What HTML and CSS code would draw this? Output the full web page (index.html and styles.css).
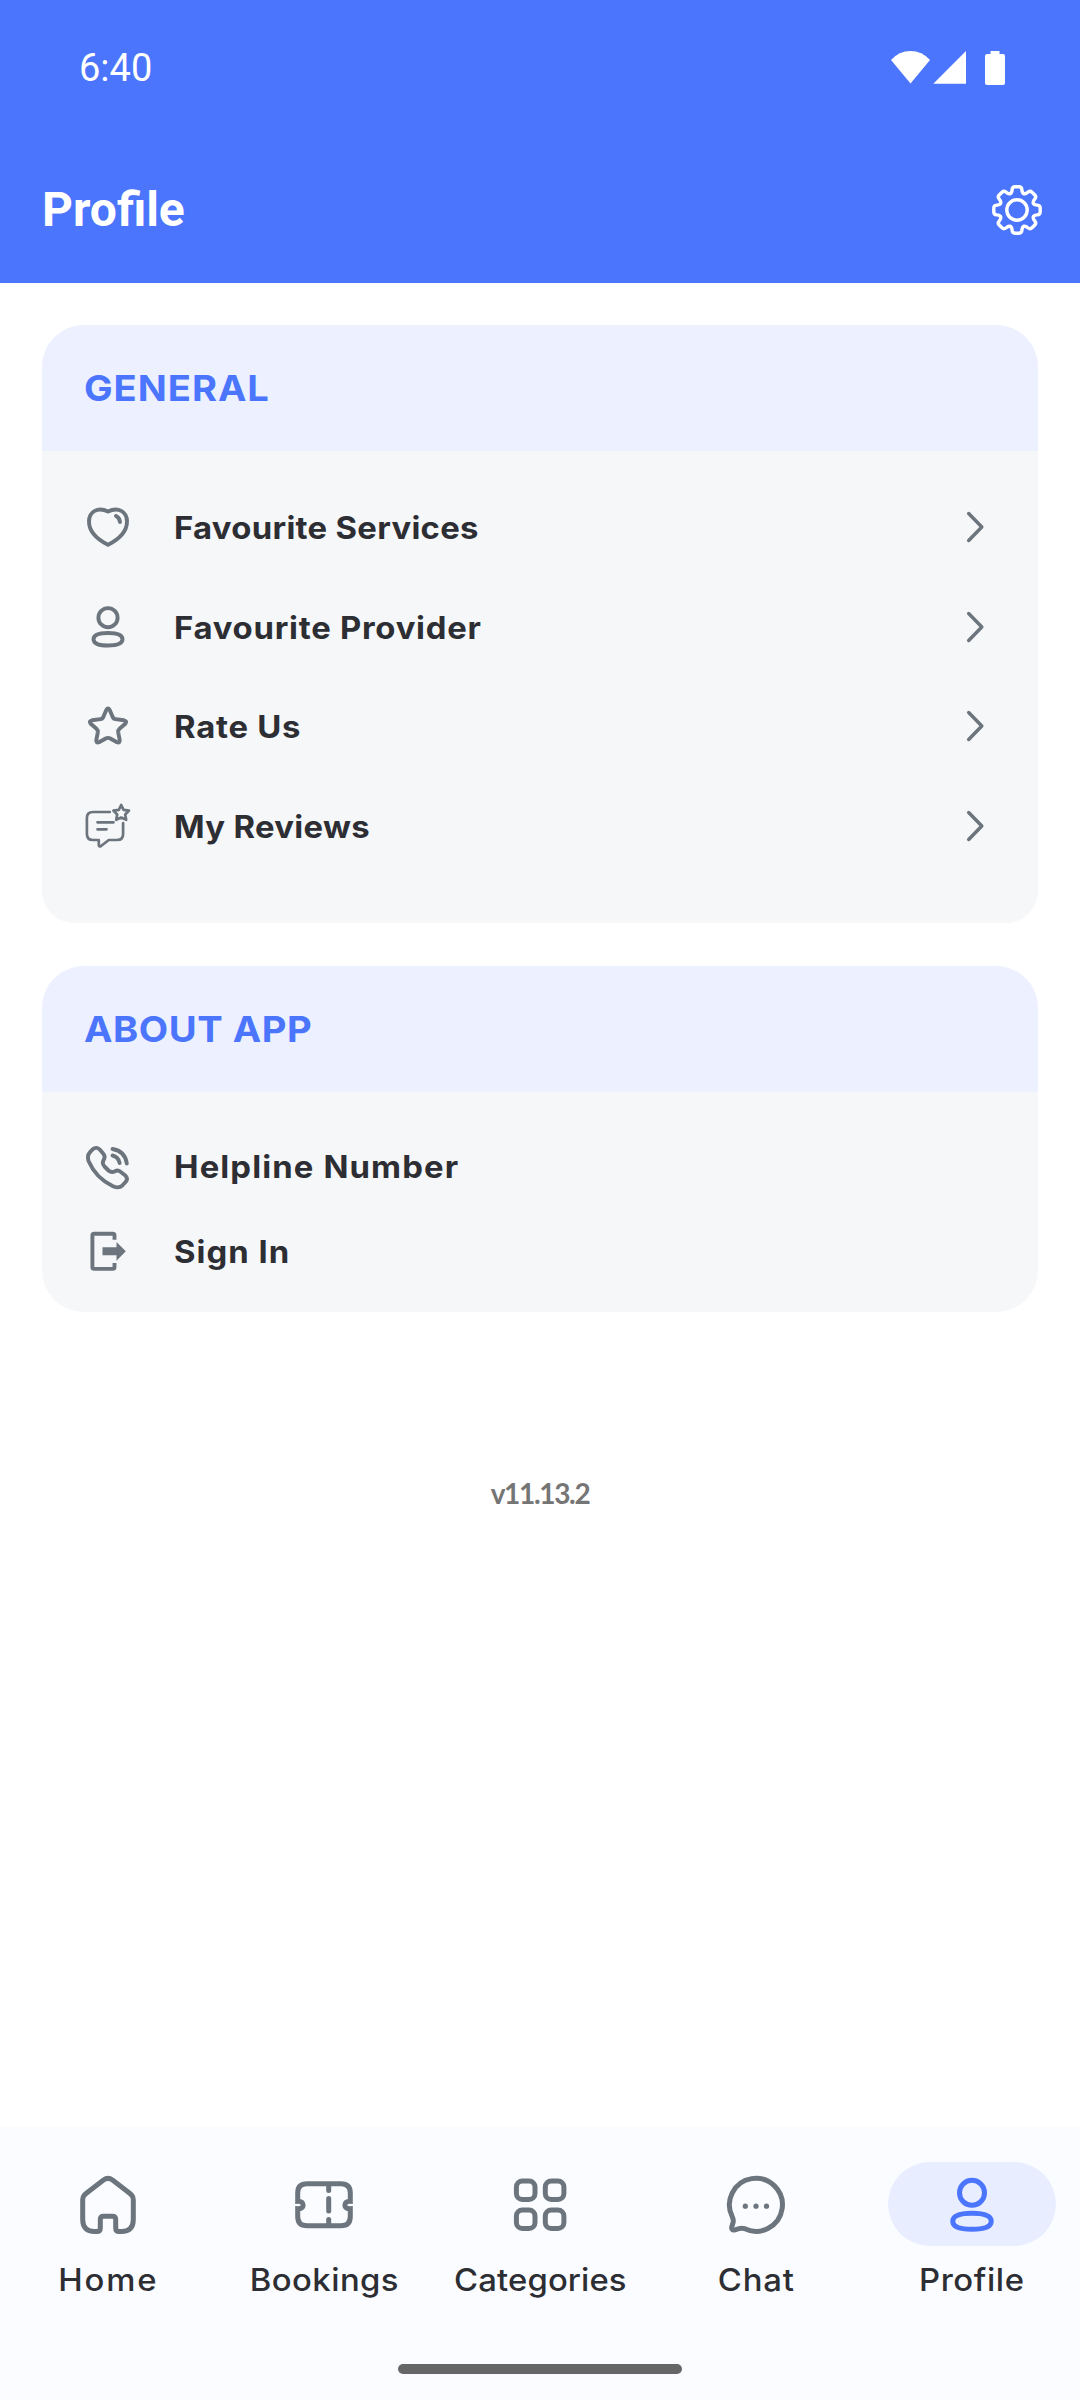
FILE: index.html
```html
<!DOCTYPE html>
<html lang="en">
<head>
<meta charset="utf-8">
<title>Profile</title>
<link rel="stylesheet" href="styles.css">
</head>
<body>
<header class="header">
  <div class="status">
    <span class="clock">6:40</span>
    <svg class="status-icons" width="114" height="36" viewBox="891 50 114 36">
      <path d="M891 60Q899 51 910.500 51T930 60L910.500 83.500Z"/>
      <path d="M933.300 83.700L966 51V83.700Z"/>
      <path d="M990.500 54V51H999.500V54H1003Q1005 54 1005 56V83Q1005 85 1003 85H987Q985 85 985 83V56Q985 54 987 54Z"/>
    </svg>
  </div>
  <div class="appbar">
    <h1 class="title">Profile</h1>
    <svg class="gear" width="54" height="54" viewBox="-27 -27 54 54">
      <defs><path id="tooth" d="M-6.800 -16.400C-5.500 -17 -5 -18.500 -4.900 -20.200C-4.700 -22.500 -4 -23.200 -2 -23.200H2C4 -23.200 4.700 -22.500 4.900 -20.200C5 -18.500 5.500 -17 6.800 -16.400"/></defs>
      <circle r="10.200"/>
      <use href="#tooth"/><use href="#tooth" transform="rotate(45)"/><use href="#tooth" transform="rotate(90)"/><use href="#tooth" transform="rotate(135)"/><use href="#tooth" transform="rotate(180)"/><use href="#tooth" transform="rotate(225)"/><use href="#tooth" transform="rotate(270)"/><use href="#tooth" transform="rotate(315)"/>
    </svg>
  </div>
</header>

<main class="content">
  <section class="card card-general">
    <h2 class="card-title"><span class="card-text general-title">GENERAL</span></h2>
    <ul class="list">
      <li class="row">
        <svg class="icon" viewBox="0 0 48 48"><path d="M24 8.600C14 3.500 5 8.500 5 18.500C5 28.500 13.500 36.500 24 41.800C34.500 36.500 43 28.500 43 18.500C43 8.500 34 3.500 24 8.600Z"/><path d="M32 13Q35.500 14.500 36 19"/></svg>
        <span class="label l-services">Favourite Services</span>
        <svg class="icon chevron" viewBox="0 0 48 48"><path d="M17.700 10.500L30.800 24L17.700 37.500"/></svg>
      </li>
      <li class="row">
        <svg class="icon" viewBox="0 0 48 48"><circle cx="24" cy="14.700" r="9.600"/><path d="M24 30C33 30 38.500 31.800 38.500 36.300S33 42.500 24 42.500S9.500 40.800 9.500 36.300S15 30 24 30Z"/></svg>
        <span class="label l-provider">Favourite Provider</span>
        <svg class="icon chevron" viewBox="0 0 48 48"><path d="M17.700 10.500L30.800 24L17.700 37.500"/></svg>
      </li>
      <li class="row">
        <svg class="icon" viewBox="0 0 48 48"><path d="M22.300 8Q24 5 25.700 8L28.500 14.500Q29.300 16.800 31.500 17.100L40 18.300Q43.500 19 41.300 21.800L35.500 26.800Q34 28.100 34.200 30.300L35.700 38Q36 41.500 33 40.300L26.300 36.500Q24 35.300 21.700 36.500L15 40.300Q12 41.500 12.300 38L13.800 30.300Q14 28.100 12.500 26.800L6.700 21.800Q4.500 19 8 18.300L16.500 17.100Q18.700 16.800 19.500 14.500Z"/></svg>
        <span class="label l-rate">Rate Us</span>
        <svg class="icon chevron" viewBox="0 0 48 48"><path d="M17.700 10.500L30.800 24L17.700 37.500"/></svg>
      </li>
      <li class="row">
        <svg class="icon thin" viewBox="0 0 48 48"><path d="M25.800 10H9Q2.900 10 2.900 16V32Q2.900 38 9 38H14.800V42.800Q14.800 45.300 17 44L24.800 38H33Q39.100 38 39.100 32V21M13.500 20.300H29.500M13.500 27.300H22.500"/><path d="M37.200 3L39.600 7.800L45 8.600L41.200 12.500L42.200 17.800L37.200 15.500L32.200 17.800L33.200 12.500L29.400 8.600L34.800 7.800Z"/></svg>
        <span class="label l-reviews">My Reviews</span>
        <svg class="icon chevron" viewBox="0 0 48 48"><path d="M17.700 10.500L30.800 24L17.700 37.500"/></svg>
      </li>
    </ul>
  </section>

  <section class="card card-about">
    <h2 class="card-title"><span class="card-text about-title">ABOUT APP</span></h2>
    <ul class="list list-compact">
      <li class="row">
        <svg class="icon" viewBox="0 0 48 48"><path d="M8.500 6.500C11 4.200 14 4.500 16 6.800L19.500 11C21.200 13.200 20.800 15 19.600 17C18.200 19.500 18.600 21.500 20.500 23.500L24.500 27.500C26.500 29.300 28.800 29.500 31 28.300C33 27.200 34.500 27.200 36.500 28.700L41 32.200C43.300 34.200 43.500 36.500 41.800 38.700L38.500 42.300C36 44.800 32.500 44.800 29 43.200C18 38 9.500 29.500 4.800 18.500C3.300 14.500 3.800 11.500 6 9.200Z"/><path d="M28.500 6Q41 8 42.800 20.500M28.500 12.500Q34.500 14 35.600 20"/></svg>
        <span class="label l-helpline">Helpline Number</span>
      </li>
      <li class="row">
        <svg class="icon flat" viewBox="0 0 48 48"><path d="M30.500 12.700V8.500Q30.500 6.700 28.700 6.700H10.200Q8.400 6.700 8.400 8.500V40Q8.400 41.900 10.200 41.900H28.700Q30.500 41.900 30.500 40V36"/><path class="solid" d="M18.500 20.300H32.500V15L41.800 24.300L32.500 33.700V28.300H18.500Z"/></svg>
        <span class="label l-sign">Sign In</span>
      </li>
    </ul>
  </section>
  <p class="version">v11.13.2</p>
</main>

<nav class="nav">
  <div class="tabs">
    <a class="tab"><span class="pill"><svg class="tab-icon" viewBox="0 0 64 64"><path d="M27.500 7Q32 3.800 36.500 7L54 20.500Q57.300 23 57.300 27V46.500Q57.300 58.500 45.300 58.500H43Q39.700 58.500 39.700 55V46.500Q39.700 43.200 36.400 43.200H27.600Q24.300 43.200 24.300 46.500V55Q24.300 58.500 21 58.500H18.700Q6.700 58.500 6.700 46.500V27Q6.700 23 10 20.500Z"/></svg></span><span class="tab-label t-home">Home</span></a>
    <a class="tab"><span class="pill"><svg class="tab-icon" viewBox="0 0 64 64"><path class="butt" d="M5.700 28.200V20Q5.700 10.800 15 10.800H49Q58.300 10.800 58.300 20V28.200C51 27.500 51 36.500 58.300 35.800V43.500Q58.300 52.800 49 52.800H15Q5.700 52.800 5.700 43.500V35.800C13 36.500 13 27.500 5.700 28.200Z"/><path d="M36.700 12V17.500M36.700 25.500V38M36.700 46.500V52"/></svg></span><span class="tab-label t-bookings">Bookings</span></a>
    <a class="tab"><span class="pill"><svg class="tab-icon" viewBox="0 0 64 64"><rect x="8.400" y="8" width="18.600" height="18.600" rx="6"/><rect x="37.300" y="8" width="18.600" height="18.600" rx="6"/><rect x="8.400" y="36.900" width="18.600" height="18.600" rx="6"/><rect x="37.300" y="36.900" width="18.600" height="18.600" rx="6"/></svg></span><span class="tab-label t-categories">Categories</span></a>
    <a class="tab"><span class="pill"><svg class="tab-icon" viewBox="0 0 64 64"><path d="M20.300 55.600A26.500 26.500 0 1 0 8.300 43.800C9.500 46.200 9.700 47.500 9 49.800L7.800 53.800C7.200 56.300 8.500 57.500 11 56.800L15 55.600C17 55 18.300 54.800 20.300 55.600Z"/><g class="solid"><circle cx="21.300" cy="33.200" r="2.600"/><circle cx="32" cy="33.200" r="2.600"/><circle cx="42.500" cy="33.200" r="2.600"/></g></svg></span><span class="tab-label t-chat">Chat</span></a>
    <a class="tab active"><span class="pill"><svg class="tab-icon" viewBox="0 0 64 64"><circle cx="32" cy="19.800" r="12.500"/><path d="M32 40.200C44 40.200 51.200 42.400 51.200 48.200S44 56.200 32 56.200S12.800 54 12.800 48.200S20 40.200 32 40.200Z"/></svg></span><span class="tab-label t-profile">Profile</span></a>
  </div>
  <div class="home-bar"></div>
</nav>
</body>
</html>
```
FILE: styles.css
```css
* { box-sizing: border-box; margin: 0; padding: 0; }
body {
  width: 1080px;
  height: 2400px;
  display: flex;
  flex-direction: column;
  background: #fff;
  color: #2d2e33;
  font-family: Inter, "Open Sans", sans-serif;
}
svg { display: block; flex: none; }

.header { height: 283px; background: #4b75fc; color: #fff; font-family: Roboto, sans-serif; }
.status {
  height: 136px;
  padding: 0 75px 0 79px;
  display: flex;
  align-items: center;
  justify-content: space-between;
}
.clock { font-size: 38px; }
.status-icons { fill: #fff; }
.appbar {
  height: 147px;
  padding: 0 36px 0 42px;
  display: flex;
  align-items: center;
  justify-content: space-between;
}
.title { font-size: 48px; font-weight: 700; line-height: 56px; padding-top: 1px; }
.gear { fill: none; stroke: #fff; stroke-width: 3.400; stroke-linecap: round; stroke-linejoin: round; }

.content { flex: 1; padding: 42px 42px 0; display: flex; flex-direction: column; gap: 43px; }
.card { background: #f6f7f9; overflow: hidden; flex: none; }
.card-general { height: 598px; border-radius: 42px 42px 32px 32px; }
.card-about { height: 346px; border-radius: 42px; }
.card-title {
  height: 126px;
  padding-left: 41.500px;
  background: #ecf0ff;
  color: #4b75fc;
  font-size: 36px;
  font-weight: 750;
  line-height: 126px;
}
.card-text { display: inline-block; transform: scaleX(1.06); transform-origin: left; }
.general-title { letter-spacing: 0.900px; }
.about-title { letter-spacing: 0.500px; }

.list { list-style: none; padding: 26px 39px 0 41.500px; display: flex; flex-direction: column; }
.row { height: 99.800px; display: flex; align-items: center; }
.list-compact { padding-top: 32.500px; }
.list-compact .row { height: 84.500px; }
.icon {
  width: 48px;
  height: 48px;
  fill: none;
  stroke: #6c757d;
  stroke-width: 3.900;
  stroke-linecap: round;
  stroke-linejoin: round;
}
.icon.thin { stroke-width: 2.700; }
.icon.flat { stroke-linecap: butt; }
.icon .solid { fill: #6c757d; stroke: none; }
.icon.chevron { margin-left: auto; stroke-width: 3.500; }
.label {
  margin-left: 42px;
  padding-top: 2px;
  font-size: 31px;
  font-weight: 750;
  line-height: 40px;
  white-space: nowrap;
  transform: scaleX(1.06);
  transform-origin: left;
}
.list-compact .label { padding-top: 1px; }
.l-services { letter-spacing: 0.280px; }
.l-provider { letter-spacing: 0.700px; }
.l-rate { letter-spacing: 0.700px; }
.l-reviews { letter-spacing: 0.300px; }
.l-helpline { letter-spacing: 1.050px; }
.l-sign { letter-spacing: 0.950px; }

.version {
  margin-top: 118px;
  text-align: center;
  color: #757575;
  font: 700 28px/40px Lato, sans-serif;
  letter-spacing: -1.320px;
}

.nav { height: 273px; background: #fafcff; display: flex; flex-direction: column; align-items: center; }
.tabs { width: 100%; padding-top: 35px; display: grid; grid-template-columns: repeat(5, 1fr); }
.tab { display: flex; flex-direction: column; align-items: center; }
.pill { width: 168px; height: 84px; padding-top: 1px; border-radius: 42px; display: flex; align-items: center; justify-content: center; }
.active .pill { background: #e8eeff; }
.tab-icon {
  width: 64px;
  height: 64px;
  fill: none;
  stroke: #6c757d;
  stroke-width: 5;
  stroke-linecap: round;
  stroke-linejoin: round;
}
.active .tab-icon { stroke: #4b75fc; }
.butt { stroke-linejoin: miter; }
.tab-icon .solid { fill: #6c757d; stroke: none; }
.tab-label { margin-top: 14px; font-size: 31px; font-weight: 500; line-height: 40px; transform: scaleX(1.06); }
.t-home { letter-spacing: 1.770px; }
.t-bookings { letter-spacing: 0.410px; }
.t-categories { letter-spacing: 0.090px; }
.t-chat { letter-spacing: 0.770px; }
.t-profile { letter-spacing: 0.550px; }
.home-bar { width: 284px; height: 10px; margin-top: 64px; border-radius: 5px; background: #666; }
```
